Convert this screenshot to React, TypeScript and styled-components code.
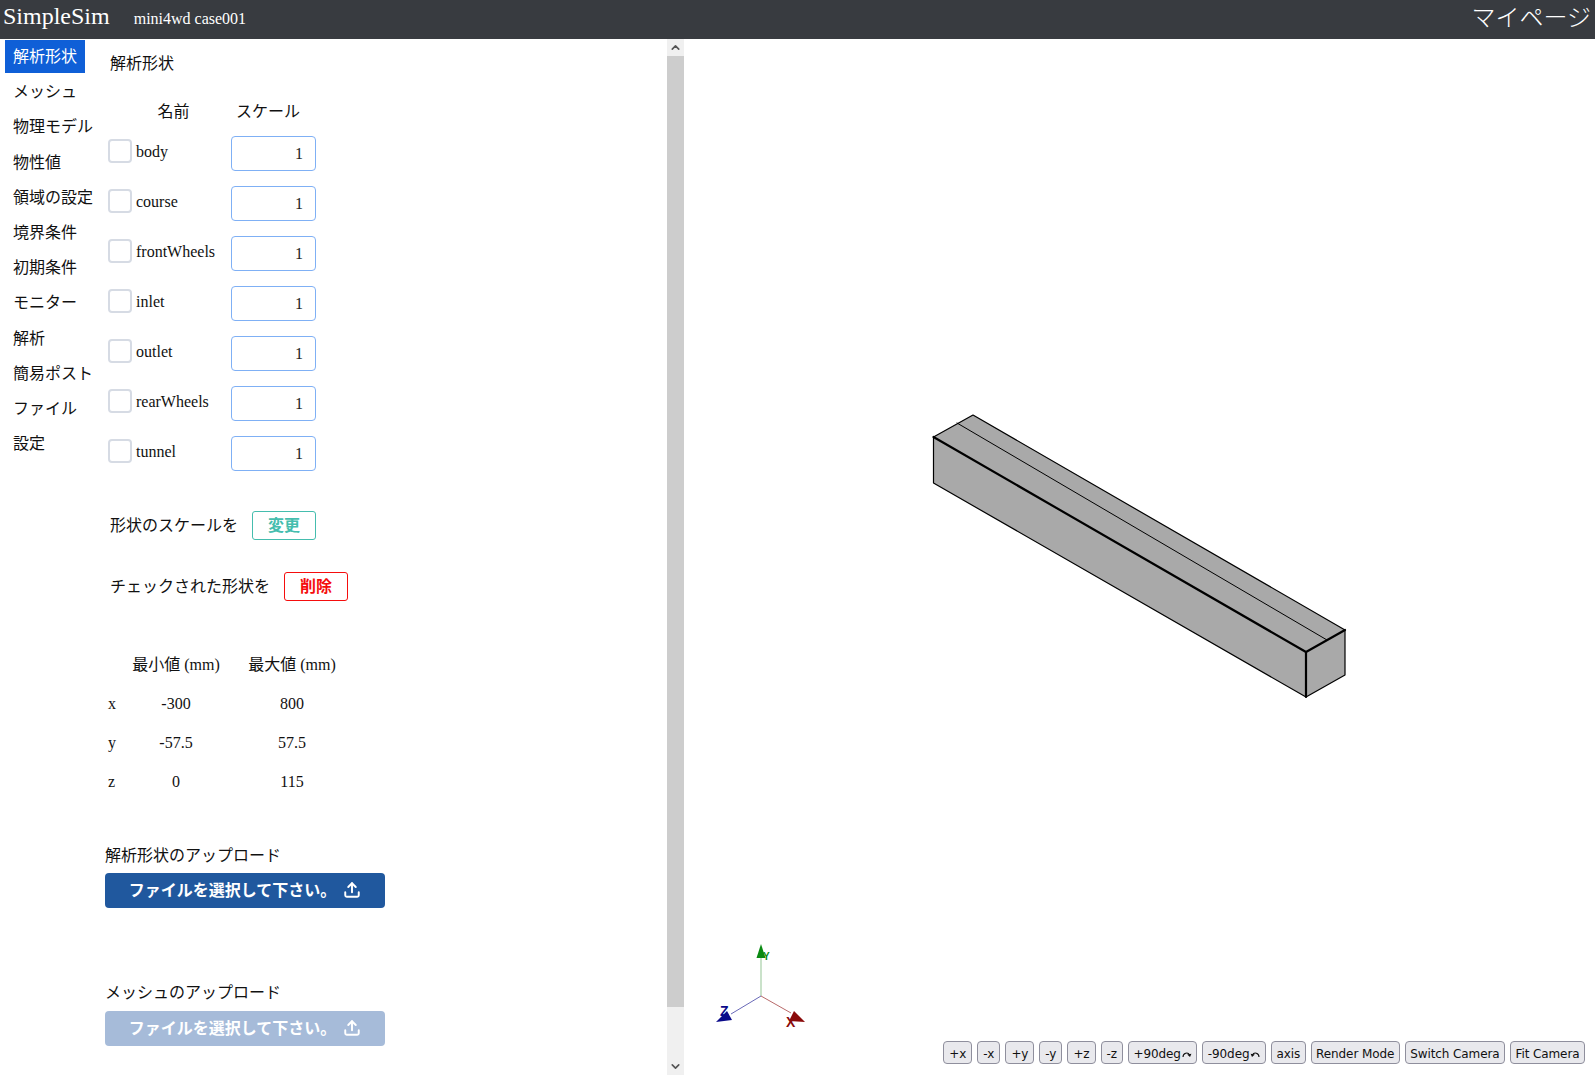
import React from "react";
import styled, { createGlobalStyle } from "styled-components";
import { Upload, ChevronUp, ChevronDown } from "lucide-react";

const FONT = `"Liberation Serif", "Noto Sans CJK JP", serif`;

const Global = createGlobalStyle`
  html, body { margin: 0; padding: 0; height: 100%; overflow: hidden; background: #fff; }
  body { font-family: ${FONT}; font-size: 16px; color: #111; }
  * { box-sizing: border-box; }
`;

const Page = styled.div`
  display: flex;
  flex-direction: column;
  height: 1075px;
  width: 1595px;
`;

const Header = styled.header`
  height: 39px;
  flex: none;
  background: #383b40;
  color: #fff;
  display: flex;
  align-items: flex-start;
  padding: 0 4px 0 3px;
`;

const Brand = styled.div`
  font-size: 24px;
  line-height: 33px;
`;

const CaseName = styled.div`
  font-size: 16px;
  line-height: 38px;
  margin-left: 24px;
  flex: 1;
`;

const MyPage = styled.div`
  font-size: 24px;
  line-height: 37px;
  font-weight: 300;
`;

const Body = styled.div`
  flex: 1;
  display: flex;
  min-height: 0;
`;

const LeftPanel = styled.div`
  width: 684px;
  flex: none;
  display: flex;
  overflow: hidden;
`;

const Nav = styled.nav`
  width: 105px;
  flex: none;
  padding: 1px 0 0 5px;
  display: flex;
  flex-direction: column;
  align-items: flex-start;
  gap: 2.2px;
`;

const NavItem = styled.div<{ $active?: boolean }>`
  height: 33px;
  line-height: 34px;
  padding: 0 8px;
  white-space: nowrap;
  background: ${(p) => (p.$active ? "#0f5fd7" : "transparent")};
  color: ${(p) => (p.$active ? "#fff" : "#111")};
`;

const Main = styled.main`
  flex: 1;
  min-width: 0;
  padding-top: 12px;
  overflow: hidden;
`;

const Title = styled.div`
  height: 24px;
  line-height: 26px;
  margin-left: 5px;
`;

const ScaleGrid = styled.div`
  margin: 24px 0 0 3px;
  display: grid;
  grid-template-columns: 28px 95px 85px;
  grid-template-rows: 37px repeat(7, 50px);
`;

const HeadName = styled.div`
  grid-column: 1 / span 2;
  line-height: 26px;
  text-align: center;
  padding-left: 8px;
`;

const HeadScale = styled.div`
  line-height: 26px;
  padding-left: 5px;
  white-space: nowrap;
`;

const CheckCell = styled.div`
  width: 24px;
  height: 24px;
  margin-top: 3px;
  border: 2px solid #d6dbe4;
  border-radius: 4px;
`;

const NameCell = styled.div`
  line-height: 24px;
  padding-top: 4px;
  white-space: nowrap;
`;

const ScaleInput = styled.input`
  width: 85px;
  height: 35px;
  border: 1px solid #7fb0f5;
  border-radius: 4px;
  text-align: right;
  padding: 0 12px 0 0;
  font: 16px ${FONT};
  color: #222;
  background: #fff;
  outline: none;
`;

const ActionRow = styled.div<{ $top: number }>`
  margin: ${(p) => p.$top}px 0 0 5px;
  display: flex;
  align-items: center;
  height: 29px;
  gap: 14px;
`;

const ActionLabel = styled.span`
  margin-bottom: 4px;
`;

const ActionButton = styled.button<{ $color: string }>`
  width: 64px;
  height: 29px;
  padding: 0 0 4px;
  background: #fff;
  border: 1px solid ${(p) => p.$color};
  border-radius: 3px;
  color: ${(p) => p.$color};
  font: bold 16px ${FONT};
`;

const BoundsGrid = styled.div`
  margin: 44.5px 0 0 3px;
  display: grid;
  grid-template-columns: 16px 104px 128px;
  grid-auto-rows: 39px;
  align-items: center;
  line-height: 24px;
`;

const BoundsCell = styled.div`
  text-align: center;
  white-space: nowrap;
`;

const UploadLabel = styled.div<{ $top: number }>`
  margin-top: ${(p) => p.$top}px;
  height: 24px;
  line-height: 26px;
`;

const UploadButton = styled.button<{ $disabled?: boolean; $top: number }>`
  margin-top: ${(p) => p.$top}px;
  display: flex;
  align-items: center;
  justify-content: center;
  gap: 7px;
  width: 280px;
  height: 35px;
  padding: 0;
  border: none;
  border-radius: 4px;
  background: ${(p) => (p.$disabled ? "#a6bbd9" : "#20589e")};
  color: #fff;
  font: bold 16px/28px "Noto Sans CJK JP", sans-serif;
`;

const UploadText = styled.span`
  margin-bottom: 4px;
`;

const UploadIcon = styled(Upload)`
  margin-bottom: 2px;
`;

const Scrollbar = styled.div`
  width: 17px;
  flex: none;
  background: #f0f0f0;
  display: flex;
  flex-direction: column;
`;

const ScrollButton = styled.div`
  height: 17px;
  flex: none;
  display: flex;
  align-items: center;
  justify-content: center;
  color: #555;
`;

const ScrollThumb = styled.div`
  height: 951px;
  flex: none;
  background: #cdcdcd;
`;

const ScrollTrack = styled.div`
  flex: 1;
`;

const Viewer = styled.div`
  flex: 1;
  position: relative;
  min-width: 0;
`;

const Scene = styled.svg`
  position: absolute;
  left: 0;
  top: 0;
  width: 911px;
  height: 1036px;
`;

const AxisLabel = styled.text<{ $color: string; $size?: number }>`
  font: bold ${(p) => p.$size ?? 14}px "Liberation Sans", sans-serif;
  fill: ${(p) => p.$color};
`;

const ViewerBar = styled.div`
  position: absolute;
  right: 10px;
  bottom: 11px;
  display: flex;
  gap: 5px;
`;

const ViewerButton = styled.button<{ $short?: boolean }>`
  height: 23px;
  padding: 2px ${(p) => (p.$short ? 5 : 4.5)}px 0;
  background: #e9e9ed;
  border: 1px solid #8f8f9d;
  border-radius: 4px;
  color: #111;
  font: 12px "DejaVu Sans", sans-serif;
  letter-spacing: -0.1px;
  white-space: nowrap;
`;

const RotateGlyph = styled.svg<{ $flip?: boolean }>`
  width: 10px;
  height: 8px;
  margin-left: 1px;
  transform: ${(p) => (p.$flip ? "scaleX(-1)" : "none")};
`;

const shapes = ["body", "course", "frontWheels", "inlet", "outlet", "rearWheels", "tunnel"];
const navItems = ["解析形状", "メッシュ", "物理モデル", "物性値", "領域の設定", "境界条件", "初期条件", "モニター", "解析", "簡易ポスト", "ファイル", "設定"];
const bounds = [
  ["x", "-300", "800"],
  ["y", "-57.5", "57.5"],
  ["z", "0", "115"],
];
const views = ["+x", "-x", "+y", "-y", "+z", "-z"];
const modes = ["axis", "Render Mode", "Switch Camera", "Fit Camera"];

// scene coordinates are page coordinates minus the viewer origin (684, 39)
const P = (x: number, y: number) => `${x - 684},${y - 39}`;

function Box() {
  return (
    <g stroke="#000" strokeLinejoin="round" strokeLinecap="round">
      <polygon fill="#a9a9a9" strokeWidth="1.2" points={[P(973, 415), P(933.5, 437), P(933.5, 483), P(1306, 697), P(1345, 675), P(1345, 630)].join(" ")} />
      <polyline fill="none" strokeWidth="1" points={[P(957, 423), P(1327, 640)].join(" ")} />
      <polyline fill="none" strokeWidth="2.2" points={[P(933.5, 437), P(1306, 652), P(1345, 630)].join(" ")} />
      <polyline fill="none" strokeWidth="2.2" points={[P(1306, 652), P(1306, 697)].join(" ")} />
    </g>
  );
}

function Axes() {
  return (
    <g>
      <line x1={77} y1={957} x2={77} y2={918} stroke="#b9d8b9" strokeWidth="1.5" />
      <polygon fill="#0a8a12" points="77,905 72.5,919 81.5,919" />
      <AxisLabel $color="#0a8a12" $size={10} x={79} y={921}>Y</AxisLabel>
      <line x1={77} y1={957} x2={47} y2={975} stroke="#6a6ab8" strokeWidth="1" />
      <polygon fill="#0a0a8a" points="32,983 43,972 48,981" />
      <AxisLabel $color="#0a0a8a" x={36} y={977}>Z</AxisLabel>
      <line x1={77} y1={957} x2={107} y2={974} stroke="#b86a6a" strokeWidth="1" />
      <polygon fill="#8a0a0a" points="121,983 110,972 105,982" />
      <AxisLabel $color="#8a0a0a" x={102} y={988}>X</AxisLabel>
    </g>
  );
}

function Rotate({ flip }: { flip?: boolean }) {
  return (
    <RotateGlyph viewBox="0 0 10 8" $flip={flip}>
      <path d="M1 7 C1 3 6 1.5 7.5 5" fill="none" stroke="#111" strokeWidth="1.1" />
      <path d="M5.2 4.6 L8 7 L9.4 3.8 Z" fill="#111" />
    </RotateGlyph>
  );
}

export default function App() {
  return (
    <Page>
      <Global />
      <Header>
        <Brand>SimpleSim</Brand>
        <CaseName>mini4wd case001</CaseName>
        <MyPage>マイページ</MyPage>
      </Header>
      <Body>
        <LeftPanel>
          <Nav>
            {navItems.map((n, i) => (
              <NavItem key={n} $active={i === 0}>{n}</NavItem>
            ))}
          </Nav>
          <Main>
            <Title>解析形状</Title>
            <ScaleGrid>
              <HeadName>名前</HeadName>
              <HeadScale>スケール</HeadScale>
              {shapes.map((s) => (
                <React.Fragment key={s}>
                  <CheckCell />
                  <NameCell>{s}</NameCell>
                  <ScaleInput defaultValue="1" />
                </React.Fragment>
              ))}
            </ScaleGrid>
            <ActionRow $top={25}>
              <ActionLabel>形状のスケールを</ActionLabel>
              <ActionButton $color="#45bdae">変更</ActionButton>
            </ActionRow>
            <ActionRow $top={32}>
              <ActionLabel>チェックされた形状を</ActionLabel>
              <ActionButton $color="#f50d0d">削除</ActionButton>
            </ActionRow>
            <BoundsGrid>
              <div />
              <BoundsCell>最小値 (mm)</BoundsCell>
              <BoundsCell>最大値 (mm)</BoundsCell>
              {bounds.map(([axis, min, max]) => (
                <React.Fragment key={axis}>
                  <div>{axis}</div>
                  <BoundsCell>{min}</BoundsCell>
                  <BoundsCell>{max}</BoundsCell>
                </React.Fragment>
              ))}
            </BoundsGrid>
            <UploadLabel $top={41.5}>解析形状のアップロード</UploadLabel>
            <UploadButton $top={6}>
              <UploadText>ファイルを選択して下さい。</UploadText>
              <UploadIcon size={18} strokeWidth={2.6} />
            </UploadButton>
            <UploadLabel $top={72}>メッシュのアップロード</UploadLabel>
            <UploadButton $disabled $top={7}>
              <UploadText>ファイルを選択して下さい。</UploadText>
              <UploadIcon size={18} strokeWidth={2.6} />
            </UploadButton>
          </Main>
          <Scrollbar>
            <ScrollButton><ChevronUp size={13} strokeWidth={3} /></ScrollButton>
            <ScrollThumb />
            <ScrollTrack />
            <ScrollButton><ChevronDown size={13} strokeWidth={3} /></ScrollButton>
          </Scrollbar>
        </LeftPanel>
        <Viewer>
          <Scene viewBox="0 0 911 1036">
            <Box />
            <Axes />
          </Scene>
          <ViewerBar>
            {views.map((v) => (
              <ViewerButton key={v} $short>{v}</ViewerButton>
            ))}
            <ViewerButton>+90deg<Rotate /></ViewerButton>
            <ViewerButton>-90deg<Rotate flip /></ViewerButton>
            {modes.map((m) => (
              <ViewerButton key={m}>{m}</ViewerButton>
            ))}
          </ViewerBar>
        </Viewer>
      </Body>
    </Page>
  );
}
